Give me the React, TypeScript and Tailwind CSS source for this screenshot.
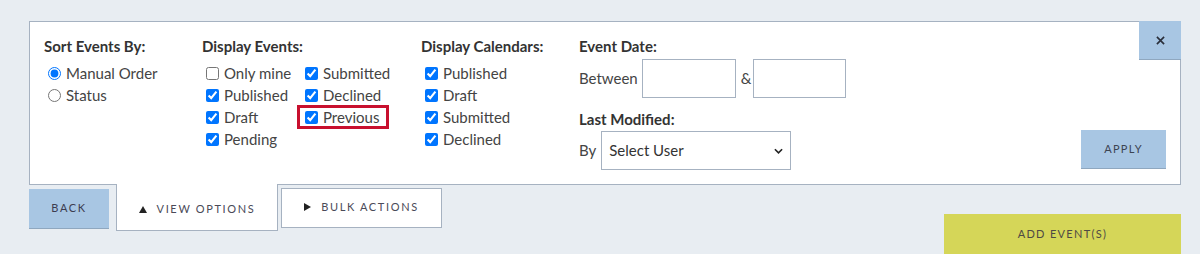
const SORT = ["Manual Order", "Status"];
const EVENTS = [
  { label: "Only mine", on: false },
  { label: "Published", on: true },
  { label: "Draft", on: true },
  { label: "Pending", on: true },
  { label: "Submitted", on: true },
  { label: "Declined", on: true },
  { label: "Previous", on: true, flagged: true },
];
const CALENDARS = ["Published", "Draft", "Submitted", "Declined"];

function Check({ label, on, flagged }: { label: string; on: boolean; flagged?: boolean }) {
  return (
    <label
      className={`flex items-center gap-[5px] ${
        flagged
          ? "-mx-[4px] -my-px h-[24px] w-[92px] border-[3px] border-[#c8102e] pl-[1px]"
          : "h-[22px]"
      }`}
    >
      <input type="checkbox" defaultChecked={on} className="m-0 ml-[4px] h-[13px] w-[13px]" />
      <span>{label}</span>
    </label>
  );
}

export default function App() {
  return (
    <div className="min-h-[254px] overflow-hidden bg-[#e8edf2] pt-[21px] font-['Lato',sans-serif] text-[15px] text-[#444]">
      <div className="ml-[29px] w-[1152px]">
        <div className="relative flex border border-[#a6b2c1] bg-white pb-[14px] pl-[14px] pr-[14px] pt-[14px]">
          <div className="w-[158px]">
            <h3 className="h-[20px] font-bold leading-[20px] text-[#333]">Sort Events By:</h3>
            <div className="mt-[6px]">
              {SORT.map((s, i) => (
                <label key={s} className="flex h-[22px] items-center gap-[5px]">
                  <input
                    type="radio"
                    name="sort"
                    defaultChecked={i === 0}
                    className="m-0 ml-[4px] h-[13px] w-[13px]"
                  />
                  <span>{s}</span>
                </label>
              ))}
            </div>
          </div>

          <div className="w-[219px]">
            <h3 className="h-[20px] font-bold leading-[20px] text-[#333]">Display Events:</h3>
            <div className="mt-[6px] grid grid-flow-col grid-cols-[99px_1fr] grid-rows-[repeat(4,22px)]">
              {EVENTS.map((e) => (
                <Check key={e.label} label={e.label} on={e.on} flagged={e.flagged} />
              ))}
            </div>
          </div>

          <div className="w-[158px]">
            <h3 className="h-[20px] font-bold leading-[20px] text-[#333]">Display Calendars:</h3>
            <div className="mt-[6px]">
              {CALENDARS.map((c) => (
                <Check key={c} label={c} on />
              ))}
            </div>
          </div>

          <div className="flex flex-1 items-end justify-between">
            <div>
              <h3 className="h-[20px] font-bold leading-[20px] text-[#333]">Event Date:</h3>
              <div className="mt-[3px] flex items-center">
                <span className="mr-[4px]">Between</span>
                <input className="h-[39px] w-[94px] border border-[#a6b2c1] bg-white" />
                <span className="ml-[5px] mr-[2px]">&amp;</span>
                <input className="h-[39px] w-[93px] border border-[#a6b2c1] bg-white" />
              </div>
              <h3 className="mt-[11px] h-[20px] font-bold leading-[20px] text-[#333]">Last Modified:</h3>
              <div className="mt-[2px] flex items-center">
                <span className="mr-[5px]">By</span>
                <div className="relative">
                  <select className="h-[39px] w-[190px] appearance-none border border-[#a6b2c1] bg-white pl-[7px] text-[15px] text-[#333]">
                    <option>Select User</option>
                  </select>
                  <svg
                    viewBox="0 0 10 6"
                    className="pointer-events-none absolute right-[8px] top-[17px] h-[6px] w-[9px]"
                  >
                    <path d="M1 1l4 4 4-4" fill="none" stroke="#222" strokeWidth="1.8" />
                  </svg>
                </div>
              </div>
            </div>
            <button className="mb-px h-[39px] w-[85px] border-b border-[#8fa7bf] bg-[#a8c6e3] text-[11px] tracking-[0.12em] text-[#3c4452]">
              APPLY
            </button>
          </div>

          <button className="absolute right-[-1px] top-[-1px] flex h-[39px] w-[42px] items-center justify-center border-b border-[#8fa7bf] bg-[#a8c6e3]">
            <svg viewBox="0 0 10 10" className="h-[9px] w-[9px]">
              <path d="M1 1l8 8M9 1l-8 8" stroke="#2a2f3a" strokeWidth="1.8" />
            </svg>
          </button>
        </div>

        <div className="flex items-start">
          <button className="mt-[4px] h-[40px] w-[80px] border-b border-[#8fa7bf] bg-[#a8c6e3] text-[11px] tracking-[0.15em] text-[#3c3c50]">
            BACK
          </button>
          <button className="relative z-10 -mt-px ml-[7px] flex h-[47px] w-[162px] items-center justify-center gap-[10px] border-x border-b border-[#a6b2c1] bg-white pt-[4px] text-[11px] tracking-[0.15em] text-[#4a4a58]">
            <svg viewBox="0 0 8 7" className="h-[7px] w-[8px]">
              <path d="M4 0l4 7H0z" fill="#222" />
            </svg>
            VIEW OPTIONS
          </button>
          <button className="ml-[3px] mt-[3px] flex h-[40px] w-[161px] items-center justify-center gap-[10px] border border-[#a6b2c1] bg-white pb-[2px] text-[11px] tracking-[0.15em] text-[#4a4a58]">
            <svg viewBox="0 0 7 8" className="h-[8px] w-[7px]">
              <path d="M0 0l7 4-7 4z" fill="#222" />
            </svg>
            BULK ACTIONS
          </button>
          <button className="ml-auto mt-[29px] h-[41px] w-[237px] border-b border-[#b5b545] bg-[#d5d658] text-[11px] tracking-[0.12em] text-[#4f4a44]">
            ADD EVENT(S)
          </button>
        </div>
      </div>
    </div>
  );
}
